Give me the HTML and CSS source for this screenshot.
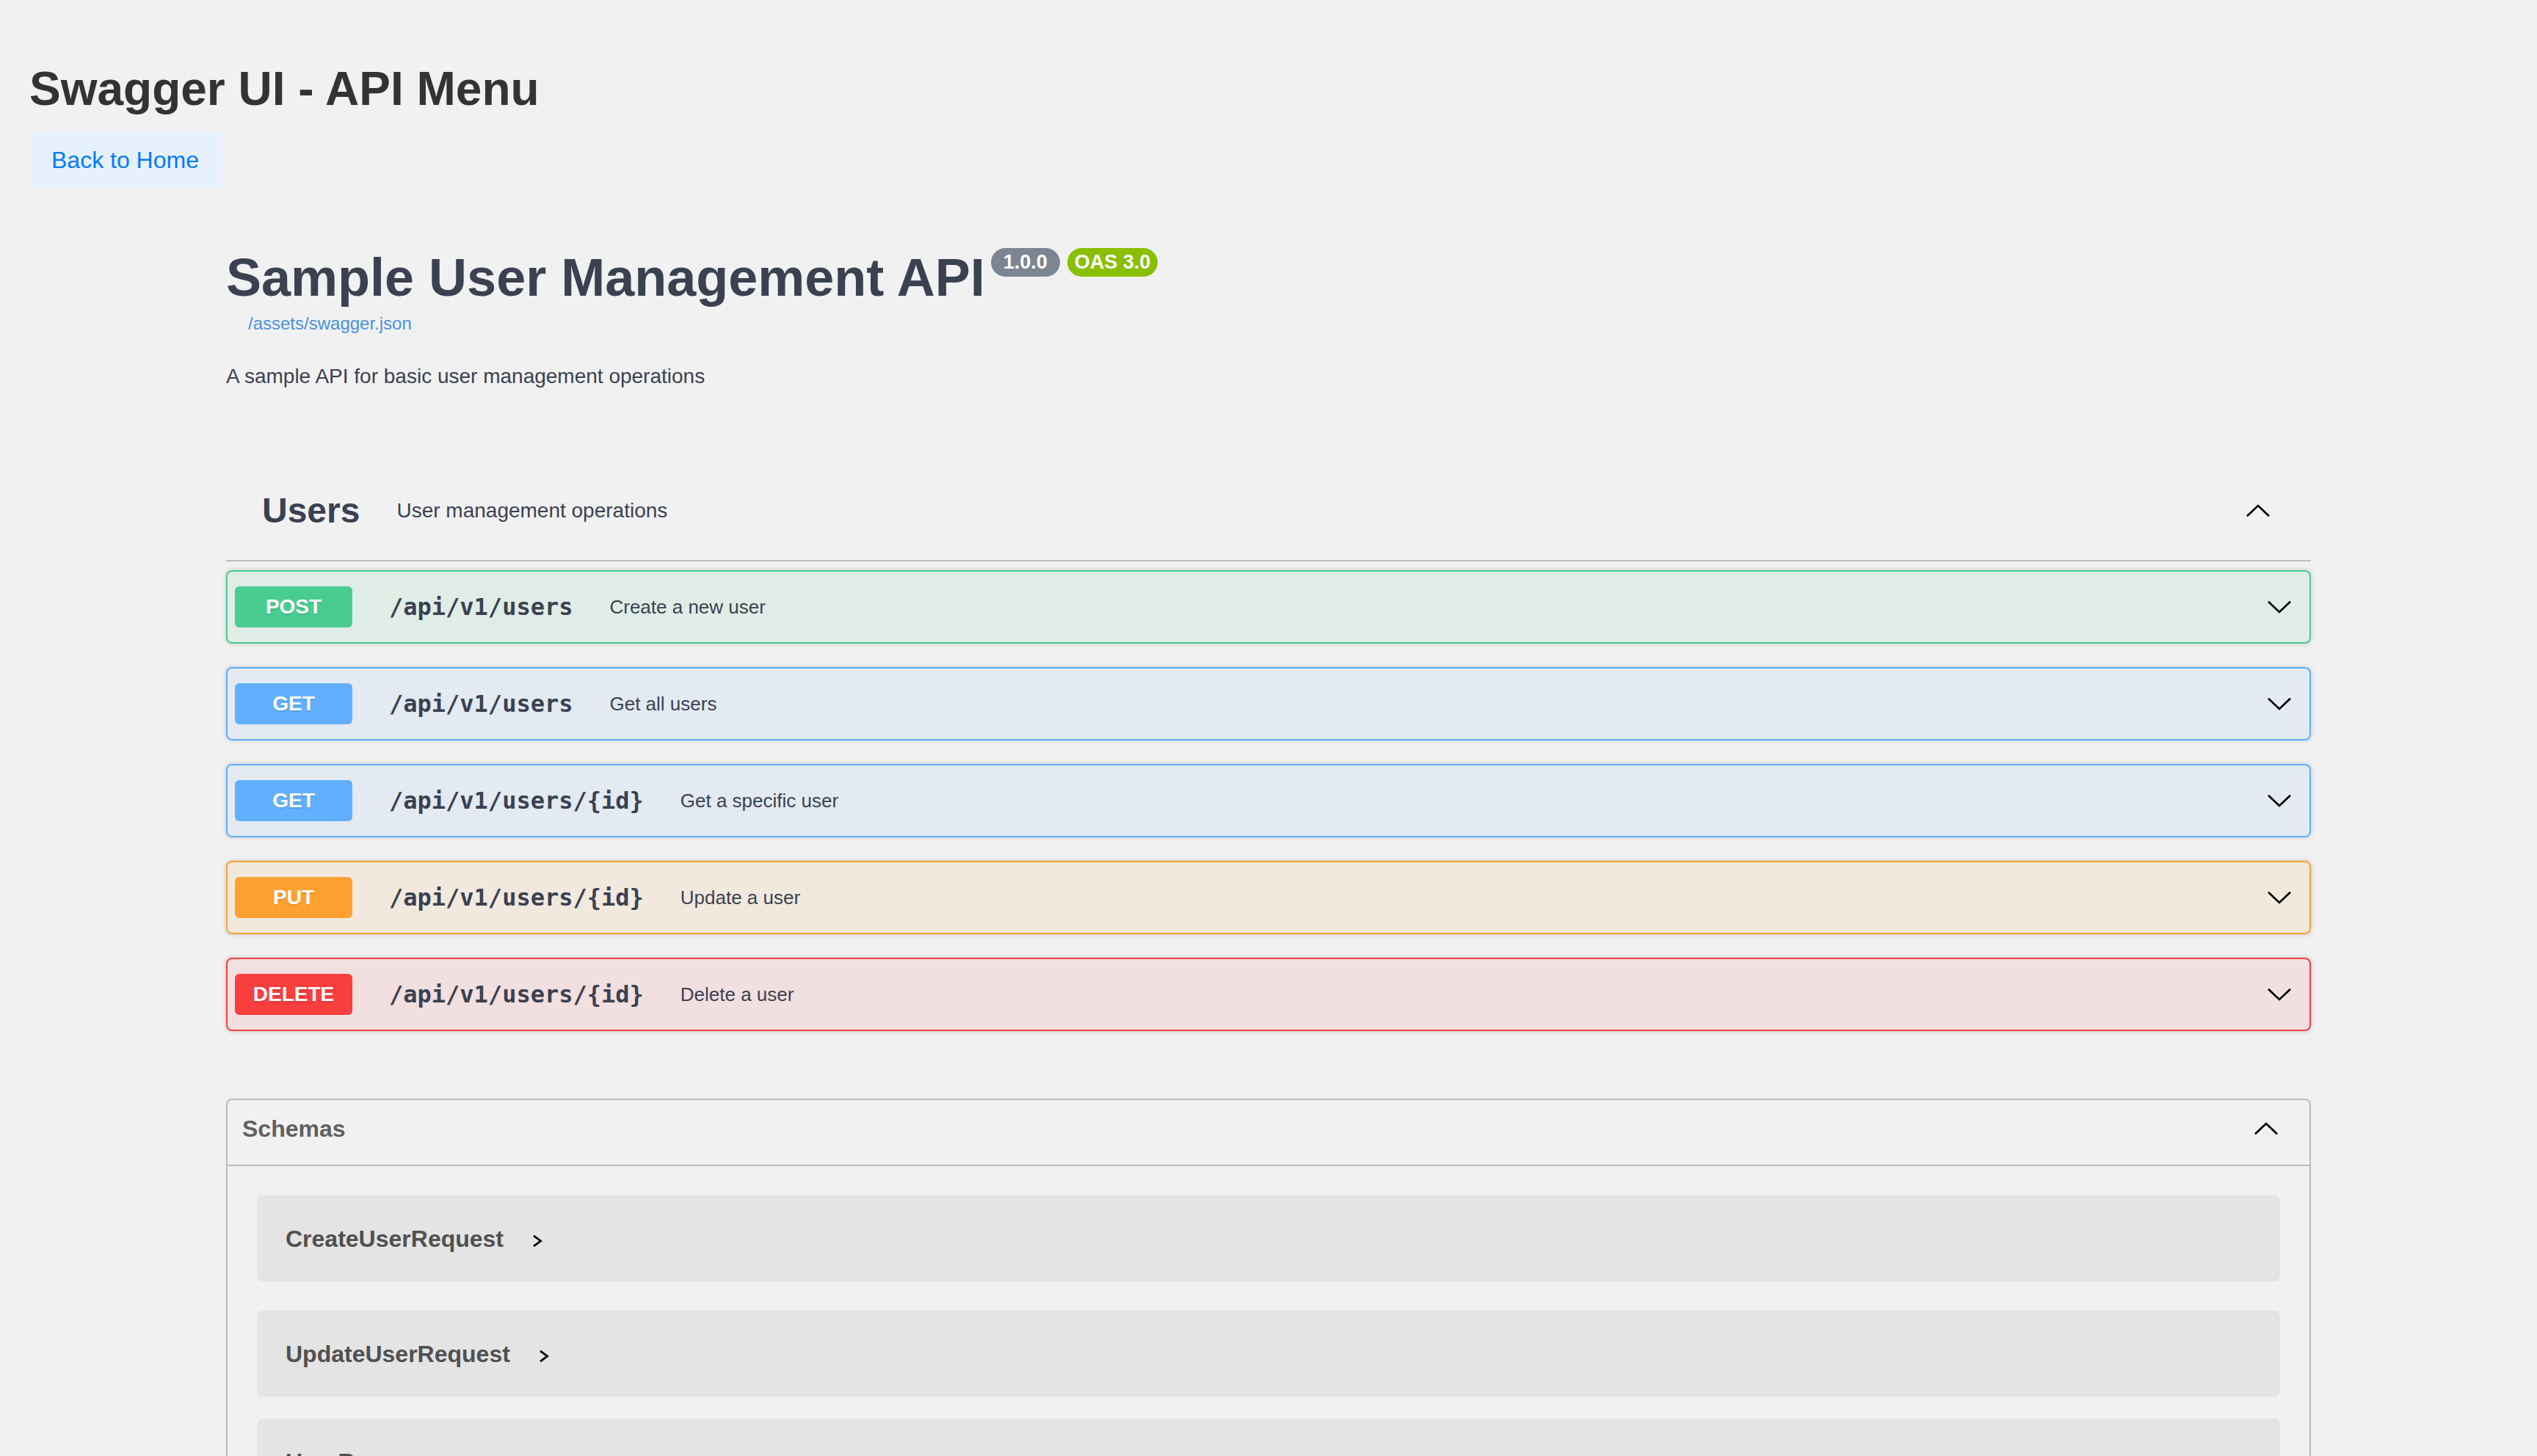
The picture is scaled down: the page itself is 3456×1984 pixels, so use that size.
FILE: index.html
```html
<!DOCTYPE html>
<html lang="en">
<head>
<meta charset="utf-8">
<title>Swagger UI - API Menu</title>
<link rel="stylesheet" href="styles.css">
</head>
<body>
<header class="page-header">
  <h1 class="page-title">Swagger UI - API Menu</h1>
  <a class="back-link" href="#">Back to Home</a>
</header>

<main class="swagger">
  <section class="info">
    <div class="info-title">
      <h2 class="title-text">Sample User Management API</h2>
      <span class="pill pill-version">1.0.0</span>
      <span class="pill pill-oas">OAS 3.0</span>
    </div>
    <div class="link-row"><a class="spec-link" href="#">/assets/swagger.json</a></div>
    <p class="description">A sample API for basic user management operations</p>
  </section>

  <section class="tag-section">
    <h3 class="tag-header">
      <span class="tag-name">Users</span>
      <span class="tag-desc">User management operations</span>
      <svg class="chev-lg" width="34" height="18" viewBox="0 0 34 18"><polyline points="2,16.2 17,2 32,16.2"/></svg>
    </h3>

    <div class="operations">
      <div class="op op-post">
        <span class="method">POST</span>
        <span class="path">/api/v1/users</span>
        <span class="summary">Create a new user</span>
        <svg class="chev-lg op-toggle" width="34" height="18" viewBox="0 0 34 18"><polyline points="2,1.8 17,16 32,1.8"/></svg>
      </div>
      <div class="op op-get">
        <span class="method">GET</span>
        <span class="path">/api/v1/users</span>
        <span class="summary">Get all users</span>
        <svg class="chev-lg op-toggle" width="34" height="18" viewBox="0 0 34 18"><polyline points="2,1.8 17,16 32,1.8"/></svg>
      </div>
      <div class="op op-get">
        <span class="method">GET</span>
        <span class="path">/api/v1/users/{id}</span>
        <span class="summary">Get a specific user</span>
        <svg class="chev-lg op-toggle" width="34" height="18" viewBox="0 0 34 18"><polyline points="2,1.8 17,16 32,1.8"/></svg>
      </div>
      <div class="op op-put">
        <span class="method">PUT</span>
        <span class="path">/api/v1/users/{id}</span>
        <span class="summary">Update a user</span>
        <svg class="chev-lg op-toggle" width="34" height="18" viewBox="0 0 34 18"><polyline points="2,1.8 17,16 32,1.8"/></svg>
      </div>
      <div class="op op-delete">
        <span class="method">DELETE</span>
        <span class="path">/api/v1/users/{id}</span>
        <span class="summary">Delete a user</span>
        <svg class="chev-lg op-toggle" width="34" height="18" viewBox="0 0 34 18"><polyline points="2,1.8 17,16 32,1.8"/></svg>
      </div>
    </div>
  </section>

  <section class="models">
    <h4 class="models-header">
      <span class="models-title">Schemas</span>
      <svg class="chev-lg" width="34" height="18" viewBox="0 0 34 18"><polyline points="2,16.2 17,2 32,16.2"/></svg>
    </h4>
    <div class="model-list">
      <div class="model-container">
        <span class="model-title">CreateUserRequest</span>
        <svg class="chev-sm" width="14" height="18" viewBox="0 0 14 18"><polyline points="2,1.8 11.6,9 2,16.2"/></svg>
      </div>
      <div class="model-container">
        <span class="model-title">UpdateUserRequest</span>
        <svg class="chev-sm" width="14" height="18" viewBox="0 0 14 18"><polyline points="2,1.8 11.6,9 2,16.2"/></svg>
      </div>
      <div class="model-container">
        <span class="model-title">UserResponse</span>
        <svg class="chev-sm" width="14" height="18" viewBox="0 0 14 18"><polyline points="2,1.8 11.6,9 2,16.2"/></svg>
      </div>
    </div>
  </section>
</main>
</body>
</html>
```

FILE: styles.css
```css
html, body {
  margin: 0;
  padding: 0;
  background: #f1f1f1;
}

body {
  font-family: "Liberation Sans", Arial, Helvetica, sans-serif;
  color: #3b4151;
}

/* page header */
.page-header {
  padding: 84px 40px 0;
}

.page-title {
  margin: 0;
  font-size: 64px;
  line-height: 74px;
  font-weight: 700;
  color: #333333;
}

.back-link {
  display: inline-block;
  margin-top: 22px;
  padding: 20px 30px;
  font-size: 32px;
  line-height: 36px;
  color: #007bff;
  background: #e7f1fe;
  border-radius: 8px;
  text-decoration: none;
}

/* swagger container */
.swagger {
  max-width: 2920px;
  margin: 0 auto;
  padding: 0 40px;
  box-sizing: border-box;
}

.info {
  margin-top: 79px;
}

.info-title {
  display: flex;
  align-items: flex-start;
}

.title-text {
  margin: 0;
  font-size: 72px;
  line-height: 86px;
  font-weight: 700;
  color: #3b4151;
}

.pill {
  margin-top: 3px;
  height: 39px;
  line-height: 39px;
  border-radius: 40px;
  font-size: 27px;
  font-weight: 700;
  color: #ffffff;
}

.pill-version {
  margin-left: 8px;
  padding: 0 17px;
  background: #7d8492;
}

.pill-oas {
  margin-left: 10px;
  padding: 0 10px;
  background: #89bf04;
}

.link-row {
  margin-top: 6px;
  padding-left: 30px;
  font-size: 24px;
  line-height: 28px;
}

.spec-link {
  color: #4990e2;
  text-decoration: none;
}

.description {
  margin: 38px 0 0;
  font-size: 28px;
  line-height: 40px;
  color: #3b4151;
}

/* tag */
.tag-section {
  margin-top: 96px;
}

.tag-header {
  display: flex;
  align-items: center;
  height: 134px;
  margin: 0;
  padding: 0 55px 0 49px;
  border-bottom: 2px solid #babcc1;
  font-weight: 400;
}

.tag-name {
  font-size: 48px;
  line-height: 58px;
  font-weight: 700;
  color: #3b4151;
}

.tag-desc {
  margin-left: 50px;
  font-size: 28px;
  line-height: 40px;
  color: #3b4151;
}

.chev-lg {
  margin-left: auto;
  flex: none;
}

.chev-lg polyline,
.chev-sm polyline {
  fill: none;
  stroke: #000000;
  stroke-width: 2.7;
  stroke-linejoin: miter;
  stroke-linecap: butt;
}

/* operations */
.operations {
  padding-top: 12px;
}

.op {
  display: flex;
  align-items: center;
  box-sizing: border-box;
  height: 100px;
  margin-bottom: 32px;
  padding: 0 24px 0 10px;
  border: 2px solid;
  border-radius: 8px;
  box-shadow: 0 0 6px rgba(0, 0, 0, 0.19);
}

.method {
  flex: none;
  width: 160px;
  height: 56px;
  line-height: 56px;
  border-radius: 6px;
  text-align: center;
  font-size: 28px;
  font-weight: 700;
  color: #ffffff;
  text-shadow: 0 2px 0 rgba(0, 0, 0, 0.1);
}

.path {
  margin-left: 50px;
  font-family: "DejaVu Sans Mono", "Liberation Mono", monospace;
  font-size: 32px;
  line-height: 40px;
  font-weight: 700;
  color: #3b4151;
}

.summary {
  margin-left: 50px;
  font-size: 26px;
  line-height: 40px;
  color: #3b4151;
}

.op-post { border-color: #49cc90; background: #e0ede7; }
.op-post .method { background: #49cc90; }

.op-get { border-color: #61affe; background: #e3eaf2; }
.op-get .method { background: #61affe; }

.op-put { border-color: #fca130; background: #f2e9de; }
.op-put .method { background: #fca130; }

.op-delete { border-color: #f93e3e; background: #f2dfdf; }
.op-delete .method { background: #f93e3e; }

/* models */
.models {
  margin-top: 92px;
  border: 2px solid #babcc1;
  border-radius: 8px;
}

.models-header {
  display: flex;
  align-items: center;
  box-sizing: border-box;
  height: 90px;
  margin: 0;
  padding: 0 42px 10px 20px;
  border-bottom: 2px solid #babcc1;
}

.models-title {
  font-size: 32px;
  line-height: 40px;
  font-weight: 700;
  color: #606060;
}

.model-list {
  padding: 40px 40px 0;
}

.model-container {
  display: flex;
  align-items: center;
  height: 117px;
  margin-bottom: 30px;
  padding-left: 39px;
  border-radius: 8px;
  background: rgba(0, 0, 0, 0.05);
}

.model-container:first-child {
  margin-bottom: 40px;
}

.model-title {
  font-size: 32px;
  line-height: 40px;
  font-weight: 700;
  color: #505050;
}

.chev-sm {
  flex: none;
  margin-left: 39px;
  margin-top: 7px;
}
```
